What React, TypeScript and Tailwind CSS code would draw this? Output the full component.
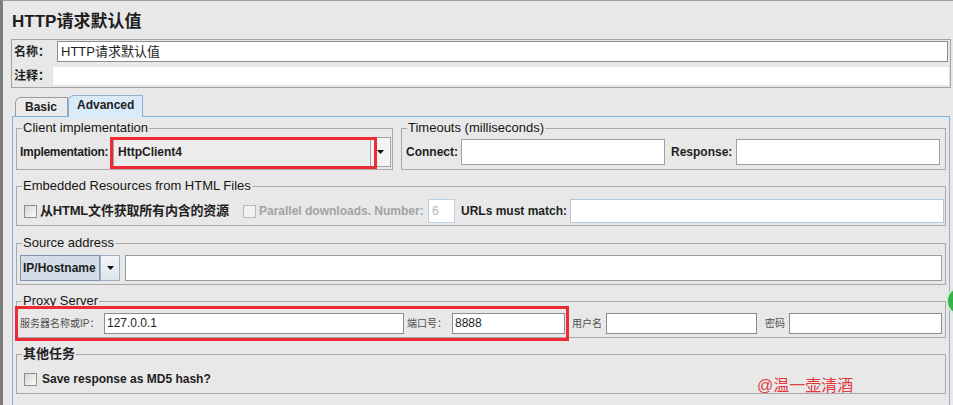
import React from "react";

const Checkbox = ({ disabled = false }: { disabled?: boolean }) => (
  <span
    className={
      disabled
        ? "block w-[13px] h-[13px] shrink-0 border border-[#b9b9b9] bg-[#f1f1f1]"
        : "block w-[13px] h-[13px] shrink-0 border border-[#8e8f8f] bg-gradient-to-br from-[#d6d6d6] to-[#fbfbfb]"
    }
  />
);

const Arrow = () => (
  <svg width="7" height="4" viewBox="0 0 7 4">
    <path d="M0 0H7L3.5 4Z" fill="#111" />
  </svg>
);

const Group = ({
  title,
  bold = false,
  className = "",
  children,
}: {
  title: string;
  bold?: boolean;
  className?: string;
  children: React.ReactNode;
}) => (
  <fieldset className={"min-w-0 border border-[#a9a9a9] " + className}>
    <legend
      className={
        bold
          ? "ml-[5px] px-[1px] text-[13px] leading-[14px] font-bold whitespace-nowrap"
          : "ml-[5px] px-[1px] text-[13px] leading-[14px] text-[#151515] whitespace-nowrap"
      }
    >
      {title}
    </legend>
    {children}
  </fieldset>
);

export default function App() {
  return (
    <div className="relative w-[953px] h-[405px] overflow-hidden bg-[#e8e8e8] text-[#1e1e1e] font-['Liberation_Sans','Noto_Sans_CJK_SC',sans-serif]">
      <div className="h-full border-t border-t-[#a0a0a0] border-l-[3px] border-l-[#7b7b7b] pl-[8px] pr-[2px]">
        {/* Title */}
        <div className="h-[38px] pt-[9px] pl-[1px] text-[17px] leading-[24px] font-bold whitespace-nowrap">
          HTTP请求默认值
        </div>

        {/* Name / comment panel */}
        <div className="h-[49px] border border-[#a3a3a3] pt-[1px] px-[2px] flex flex-col gap-[4px]">
          <div className="flex items-center h-[21px]">
            <span className="w-[43px] shrink-0 text-[12px] leading-[14px] font-bold whitespace-nowrap">名称：</span>
            <div className="flex-1 h-[21px] border border-[#8e8e8e] bg-white pl-[3px] text-[13px] leading-[19px] whitespace-nowrap">
              HTTP请求默认值
            </div>
          </div>
          <div className="flex items-center h-[20px]">
            <span className="w-[38px] shrink-0 text-[12px] leading-[14px] font-bold whitespace-nowrap">注释：</span>
            <div className="flex-1 h-[20px] bg-white border border-[#e2e2e2] -mr-[2px]" />
          </div>
        </div>

        {/* Tabs */}
        <div className="mt-[7px] ml-[4px] flex items-end h-[21px]">
          <div className="w-[53px] h-[19px] border border-b-0 border-[#9c9c9c] rounded-tl-[6px] bg-[#ebebeb] pl-[9px] text-[12px] font-bold leading-[18px]">
            Basic
          </div>
          <div className="relative z-10 w-[75px] h-[22px] -mb-[1px] border border-b-0 border-[#8eb0d1] rounded-tl-[6px] bg-[#d9eaf8] pl-[8px] text-[12px] font-bold leading-[19px]">
            Advanced
          </div>
        </div>

        {/* Tab content */}
        <div className="ml-[1px] mr-[1px] h-[300px] border border-b-0 border-[#8eb0d1]">
          <div className="border-t-2 border-[#d9eaf8] pt-[2px] px-[3px]">
            {/* Row 1 */}
            <div className="flex gap-[8px]">
              <Group title="Client implementation" className="w-[377px] pt-[2px] pb-[2px]">
                <div className="flex items-center h-[30px] pl-[3px] pr-[1px]">
                  <span className="w-[93px] shrink-0 text-[12px] font-bold leading-[14px] whitespace-nowrap tracking-[-0.3px]">Implementation:</span>
                  <div className="flex-1 h-[30px] flex border border-[#a3a3a3] bg-[#ececec]">
                    <div className="flex-1 pl-[4px] text-[12px] font-bold leading-[28px]">HttpClient4</div>
                    <div className="w-[20px] border-l border-[#a3a3a3] bg-[#f3f3f3] flex items-center justify-center">
                      <Arrow />
                    </div>
                  </div>
                </div>
              </Group>
              <Group title="Timeouts (milliseconds)" className="flex-1 pt-[2px] pb-[2px]">
                <div className="flex items-center h-[30px] pl-[4px]">
                  <span className="w-[55px] shrink-0 text-[12px] font-bold leading-[14px] whitespace-nowrap">Connect:</span>
                  <div className="w-[204px] h-[26px] border border-[#a0a0a0] bg-white" />
                  <span className="ml-[6px] w-[65px] shrink-0 text-[12px] font-bold leading-[14px] whitespace-nowrap">Response:</span>
                  <div className="w-[204px] h-[26px] border border-[#a0a0a0] bg-white" />
                </div>
              </Group>
            </div>

            {/* Embedded resources */}
            <Group title="Embedded Resources from HTML Files" className="mt-[9px] pt-[5px] pb-[1px]">
              <div className="flex items-center h-[26px] pl-[7px] pr-[1px]">
                <Checkbox />
                <span className="ml-[3px] w-[203px] shrink-0 text-[13px] font-bold leading-[16px] whitespace-nowrap tracking-[-0.2px]">
                  从HTML文件获取所有内含的资源
                </span>
                <Checkbox disabled />
                <span className="ml-[3px] w-[169px] shrink-0 text-[12px] font-bold leading-[14px] text-[#a3a3a3] whitespace-nowrap">
                  Parallel downloads. Number:
                </span>
                <div className="w-[27px] h-[24px] border border-[#bcd0e4] bg-white pl-[3px] text-[12px] leading-[22px] text-[#b5b5b5]">
                  6
                </div>
                <span className="ml-[6px] w-[109px] shrink-0 text-[12px] font-bold leading-[14px] whitespace-nowrap">URLs must match:</span>
                <div className="flex-1 h-[24px] border border-[#b4c8dc] bg-white" />
              </div>
            </Group>

            {/* Source address */}
            <Group title="Source address" className="mt-[10px] pt-[5px] pb-[3px]">
              <div className="flex items-center h-[26px] pl-[3px] pr-[3px]">
                <div className="w-[80px] h-[26px] border border-[#8194ab] bg-[#d3dde8] pl-[2px] text-[12px] font-bold leading-[24px] whitespace-nowrap">
                  IP/Hostname
                </div>
                <div className="w-[20px] h-[26px] border border-[#9fb0c3] bg-gradient-to-b from-[#f3f6f9] to-[#dde4ec] flex items-center justify-center">
                  <Arrow />
                </div>
                <div className="ml-[5px] flex-1 h-[26px] border border-[#9a9a9a] bg-white" />
              </div>
            </Group>

            {/* Proxy server */}
            <Group title="Proxy Server" className="mt-[9px] pt-[5px] pb-[3px]">
              <div className="flex items-center h-[21px] pl-[3px] pr-[3px] text-[10px] leading-[12px] text-[#505050] whitespace-nowrap">
                <span className="w-[84px] shrink-0">服务器名称或IP：</span>
                <div className="w-[300px] h-[21px] border border-[#8c8c8c] bg-white pl-[2px] text-[12px] leading-[19px] text-[#1e1e1e]">
                  127.0.0.1
                </div>
                <span className="ml-[3px] w-[45px] shrink-0">端口号：</span>
                <div className="w-[113px] h-[21px] border border-[#8c8c8c] bg-white pl-[2px] text-[12px] leading-[19px] text-[#1e1e1e]">
                  8888
                </div>
                <span className="ml-[7px] w-[34px] shrink-0">用户名</span>
                <div className="w-[151px] h-[21px] border border-[#8c8c8c] bg-white" />
                <span className="ml-[8px] w-[24px] shrink-0">密码</span>
                <div className="flex-1 h-[21px] border border-[#8c8c8c] bg-white" />
              </div>
            </Group>

            {/* Other tasks */}
            <Group title="其他任务" bold className="mt-[9px] pt-[8px] pb-[4px]">
              <div className="flex items-center h-[20px] pl-[7px]">
                <Checkbox />
                <span className="ml-[5px] text-[12px] font-bold leading-[14px] whitespace-nowrap">Save response as MD5 hash?</span>
              </div>
            </Group>
          </div>
        </div>
      </div>

      {/* Annotation overlays */}
      <div className="absolute left-[110px] top-[137px] w-[267px] h-[32px] border-[3px] border-[#ee2a33]" />
      <div className="absolute left-[15px] top-[306px] w-[554px] h-[35px] border-[3px] border-[#ee2a33]" />
      <div className="absolute left-[757px] top-[376px] text-[16px] leading-[20px] text-[#e4393e] whitespace-nowrap">@温一壶清酒</div>
      <div className="absolute left-[946px] top-[286px] w-[30px] h-[30px] rounded-full bg-[#35b34a] border-2 border-[#cfe8d3]" />
    </div>
  );
}
